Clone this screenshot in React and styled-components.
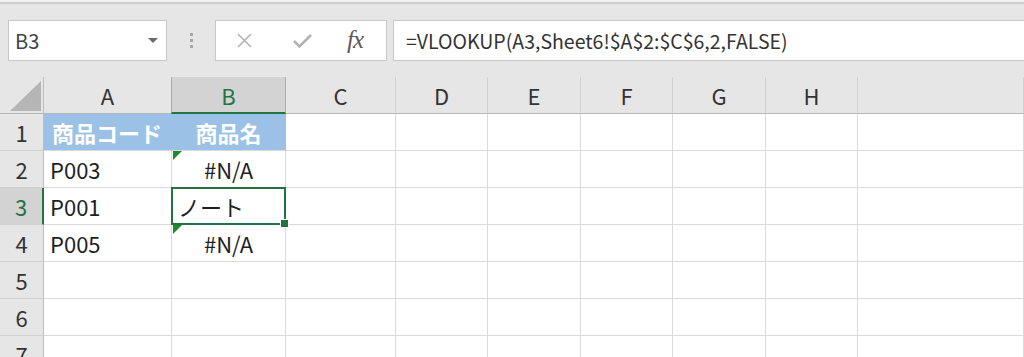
import React from "react";
import styled, { createGlobalStyle, css } from "styled-components";

const GlobalStyle = createGlobalStyle`
  html, body {
    margin: 0;
    padding: 0;
    background: #e6e6e6;
    overflow: hidden;
  }
  body {
    font-family: "Noto Sans CJK JP", "Noto Sans", sans-serif;
  }
`;

const TopStrip = styled.div`
  height: 2px;
  background: #f2f2f2;
  border-bottom: 2px solid #cdcdcd;
`;

const FormulaBar = styled.div`
  display: flex;
  align-items: stretch;
  height: 41px;
  padding: 16px 0 16px 8px;
`;

const NameBox = styled.div`
  width: 159px;
  box-sizing: border-box;
  background: #fff;
  border: 1px solid #c8c8c8;
  display: flex;
  align-items: center;
  justify-content: space-between;
  padding: 0 8px 0 6px;
  font-size: 20px;
  color: #444;
`;

const DropArrow = styled.span`
  width: 0;
  height: 0;
  border-left: 5px solid transparent;
  border-right: 5px solid transparent;
  border-top: 5px solid #6a6a6a;
`;

const Grip = styled.div`
  width: 48px;
  display: flex;
  flex-direction: column;
  align-items: center;
  justify-content: center;
  gap: 3px;

  & > span {
    width: 3px;
    height: 3px;
    background: #a6a6a6;
  }
`;

const FuncBox = styled.div`
  width: 172px;
  box-sizing: border-box;
  background: #fff;
  border: 1px solid #c8c8c8;
  display: flex;
  align-items: center;
  padding-left: 20px;

  & > svg:first-child {
    margin-right: 39px;
  }
`;

const Fx = styled.span`
  font-family: "Liberation Serif", serif;
  font-style: italic;
  font-size: 25px;
  color: #5a5a5a;
  margin-left: 34px;
  letter-spacing: -1px;
  line-height: 1;
  padding-bottom: 2px;
`;

const FormulaInput = styled.div`
  flex: 1;
  margin-left: 6px;
  margin-right: -2px;
  background: #fff;
  border: 1px solid #c8c8c8;
  display: flex;
  align-items: center;
  padding-left: 12px;
  font-size: 19.5px;
  color: #333;
`;

const Sheet = styled.div`
  display: grid;
  grid-template-columns: 44px 128px 114px 110px 92px 93px 92px 93px 92px 1fr;
  grid-auto-rows: 37px;
`;

const Corner = styled.div`
  box-sizing: border-box;
  border-right: 1px solid #bdbdbd;
  border-bottom: 1px solid #b5b5b5;
  display: flex;
  align-items: flex-end;
  justify-content: flex-end;
  padding: 0 2px 2px 0;
`;

const ColHead = styled.div`
  box-sizing: border-box;
  border-right: 1px solid #d0d0d0;
  border-bottom: 1px solid #b5b5b5;
  display: flex;
  align-items: center;
  justify-content: center;
  font-size: 22px;
  color: #333;

  ${(p) =>
    p.active &&
    css`
      background: #d3d3d3;
      color: #217346;
      border-right-color: #ababab;
      border-left: 1px solid #ababab;
      border-bottom: 2px solid #217346;
      margin-left: -1px;
    `}
`;

const RowHead = styled.div`
  box-sizing: border-box;
  border-right: 1px solid #bdbdbd;
  border-bottom: 1px solid #d0d0d0;
  display: flex;
  align-items: center;
  justify-content: center;
  font-size: 22px;
  color: #333;

  ${(p) =>
    p.active &&
    css`
      background: #d3d3d3;
      color: #217346;
      border-right: 2px solid #217346;
    `}
`;

const Cell = styled.div`
  position: relative;
  box-sizing: border-box;
  background: #fff;
  border-right: 1px solid #dadada;
  border-bottom: 1px solid #dadada;
  display: flex;
  align-items: center;
  justify-content: ${(p) => (p.center ? "center" : "flex-start")};
  padding-left: ${(p) => (p.center ? "0" : "6px")};
  font-size: 22px;
  color: #1f1f1f;
  white-space: nowrap;

  ${(p) =>
    p.head &&
    css`
      background: #9bc2e6;
      color: #fff;
      font-weight: 700;
      border-right-color: #9bc2e6;
      padding-left: ${p.center ? "0" : "8px"};
    `}

  ${(p) =>
    p.error &&
    css`
      &::before {
        content: "";
        position: absolute;
        left: 1px;
        top: 0;
        border-top: 9px solid #1e8a2e;
        border-right: 9px solid transparent;
      }
    `}

  ${(p) =>
    p.selected &&
    css`
      padding-left: 6px;
      &::after {
        content: "";
        position: absolute;
        left: -1px;
        top: -1px;
        right: -1px;
        bottom: -1px;
        border: 2px solid #217346;
      }
      & > i {
        position: absolute;
        right: -4px;
        bottom: -4px;
        width: 7px;
        height: 7px;
        background: #217346;
        border: 1px solid #fff;
        z-index: 2;
      }
    `}
`;

const cols = ["A", "B", "C", "D", "E", "F", "G", "H", ""];

const rows = [
  { n: 1, a: "商品コード", b: "商品名", head: true },
  { n: 2, a: "P003", b: "#N/A", error: true },
  { n: 3, a: "P001", b: "ノート", selected: true },
  { n: 4, a: "P005", b: "#N/A", error: true },
  { n: 5 },
  { n: 6 },
  { n: 7 },
];

const XIcon = () => (
  <svg width="17" height="17" viewBox="0 0 17 17">
    <path d="M2 2 L15 15 M15 2 L2 15" stroke="#b3b3b3" strokeWidth="1.6" fill="none" />
  </svg>
);

const CheckIcon = () => (
  <svg width="21" height="16" viewBox="0 0 21 16">
    <path d="M2 8 L7.5 13.5 L19 2" stroke="#b3b3b3" strokeWidth="2.6" fill="none" />
  </svg>
);

const CornerTriangle = () => (
  <svg width="31" height="30" viewBox="0 0 31 30">
    <polygon points="31,0 31,30 0,30" fill="#b5b5b5" />
  </svg>
);

export default function App() {
  return (
    <>
      <GlobalStyle />
      <TopStrip />
      <FormulaBar>
        <NameBox>
          <span>B3</span>
          <DropArrow />
        </NameBox>
        <Grip>
          <span />
          <span />
          <span />
        </Grip>
        <FuncBox>
          <XIcon />
          <CheckIcon />
          <Fx>fx</Fx>
        </FuncBox>
        <FormulaInput>=VLOOKUP(A3,Sheet6!$A$2:$C$6,2,FALSE)</FormulaInput>
      </FormulaBar>
      <Sheet>
        <Corner>
          <CornerTriangle />
        </Corner>
        {cols.map((c, i) => (
          <ColHead key={i} active={c === "B"}>
            {c}
          </ColHead>
        ))}
        {rows.map((r) => (
          <React.Fragment key={r.n}>
            <RowHead active={r.selected}>{r.n}</RowHead>
            <Cell head={r.head}>{r.a}</Cell>
            <Cell
              head={r.head}
              center={!r.selected}
              error={r.error}
              selected={r.selected}
            >
              {r.b}
              {r.selected && <i />}
            </Cell>
            {cols.slice(2).map((c, i) => (
              <Cell key={i} />
            ))}
          </React.Fragment>
        ))}
      </Sheet>
    </>
  );
}
